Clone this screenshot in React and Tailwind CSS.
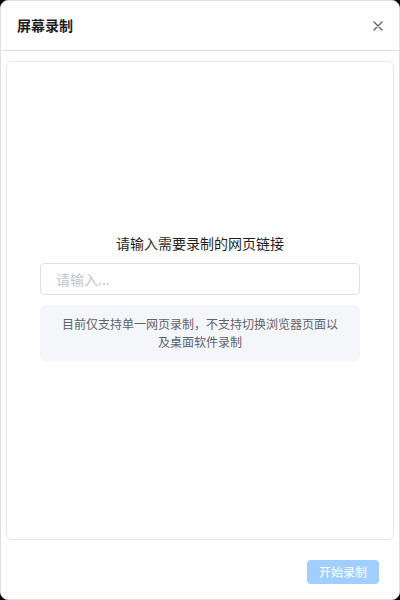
export default function App() {
  return (
    <div
      className="w-[400px] h-[600px] bg-black"
      style={{ fontFamily: '"Noto Sans CJK SC", "Liberation Sans", sans-serif' }}
    >
      <div className="w-full h-full bg-white rounded-lg border border-[#dcdfe6] flex flex-col">
        {/* header */}
        <div className="h-[50px] shrink-0 flex items-center justify-between pl-4 pr-4 border-b border-[#dcdfe6]">
          <span className="text-[14px] font-bold text-[#1f1f1f]">屏幕录制</span>
          <svg width="10" height="10" viewBox="0 0 10 10" className="text-[#606266]">
            <path d="M1 1L9 9M9 1L1 9" stroke="currentColor" strokeWidth="1.4" strokeLinecap="round" />
          </svg>
        </div>

        {/* body */}
        <div className="flex-1 px-[5px] pt-[10px] pb-[10px] flex flex-col">
          <div className="flex-1 border border-[#e4e7ed] rounded-md flex flex-col items-center justify-center px-[33px] pb-[8px]">
            <p className="text-[14px] text-[#1f1f1f] leading-[20px]">请输入需要录制的网页链接</p>
            <input
              className="mt-[10px] w-full h-[32px] border border-[#dcdfe6] rounded px-[15px] text-[14px] outline-none placeholder:text-[#c0c4cc]"
              placeholder="请输入..."
            />
            <div className="mt-[10px] w-full bg-[#f5f6fa] rounded-md px-[18px] py-[10px] text-center text-[12px] leading-[18px] text-[#606266]">
              目前仅支持单一网页录制，不支持切换浏览器页面以及桌面软件录制
            </div>
          </div>
        </div>

        {/* footer */}
        <div className="h-[49px] shrink-0 flex items-start justify-end pr-[20px] pt-[10px]">
          <button className="h-[24px] px-[12px] rounded bg-[#a0cfff] text-white text-[12px] leading-[24px]">
            开始录制
          </button>
        </div>
      </div>
    </div>
  );
}
